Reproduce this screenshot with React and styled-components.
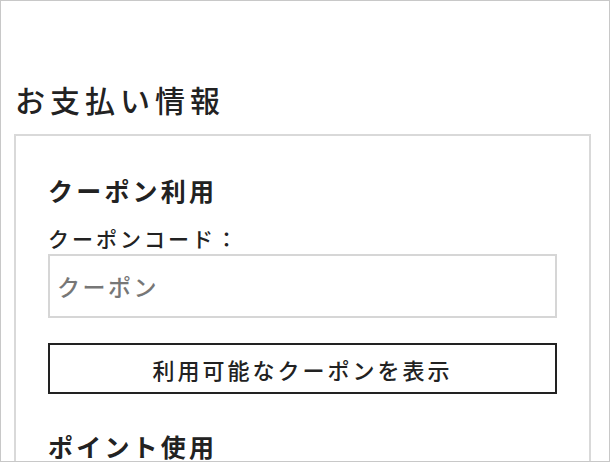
import React from 'react';
import styled, { createGlobalStyle } from 'styled-components';

const GlobalStyle = createGlobalStyle`
  html, body {
    margin: 0;
    padding: 0;
    background: #fff;
  }
  * {
    box-sizing: border-box;
  }
`;

// Styled Components
const Frame = styled.div`
  width: 610px;
  height: 462px;
  border: 1px solid #c8c8c8;
  overflow: hidden;
  padding: 76px 18px 0 13px;
  font-family: "Noto Sans CJK JP", "Noto Sans", sans-serif;
  color: #222;
`;

const PageTitle = styled.h1`
  margin: 0 0 12px 1px;
  font-size: 30px;
  font-weight: 500;
  line-height: 45px;
  letter-spacing: 5px;
`;

const Card = styled.section`
  border: 2px solid #d9d9d9;
  padding: 36px 32px 40px;
  display: flex;
  flex-direction: column;
`;

const SectionTitle = styled.h2`
  margin: ${(p) => p.$top || 0}px 0 0;
  font-size: 25px;
  font-weight: 700;
  line-height: 36px;
  letter-spacing: 3.2px;
`;

const Label = styled.label`
  margin-top: 16px;
  font-size: 21px;
  font-weight: 500;
  line-height: 28px;
  letter-spacing: 3px;
`;

const TextInput = styled.input`
  display: block;
  width: 100%;
  height: 64px;
  margin-top: 2px;
  border: 2px solid #d6d6d6;
  padding: 0 7px;
  font-family: inherit;
  font-size: 23px;
  font-weight: 500;
  letter-spacing: 2.5px;
  color: #222;
  outline: none;

  &::placeholder {
    color: #777;
  }
`;

const OutlineButton = styled.button`
  width: 100%;
  height: 51px;
  margin-top: 25px;
  border: 2px solid #222;
  background: #fff;
  font-family: inherit;
  font-size: 22px;
  font-weight: 500;
  letter-spacing: 3px;
  color: #222;
  cursor: pointer;
`;

const App = () => (
  <>
    <GlobalStyle />
    <Frame>
      <PageTitle>お支払い情報</PageTitle>
      <Card>
        <SectionTitle>クーポン利用</SectionTitle>
        <Label htmlFor="coupon">クーポンコード：</Label>
        <TextInput id="coupon" type="text" placeholder="クーポン" />
        <OutlineButton type="button">利用可能なクーポンを表示</OutlineButton>
        <SectionTitle $top={34}>ポイント使用</SectionTitle>
      </Card>
    </Frame>
  </>
);

export default App;
